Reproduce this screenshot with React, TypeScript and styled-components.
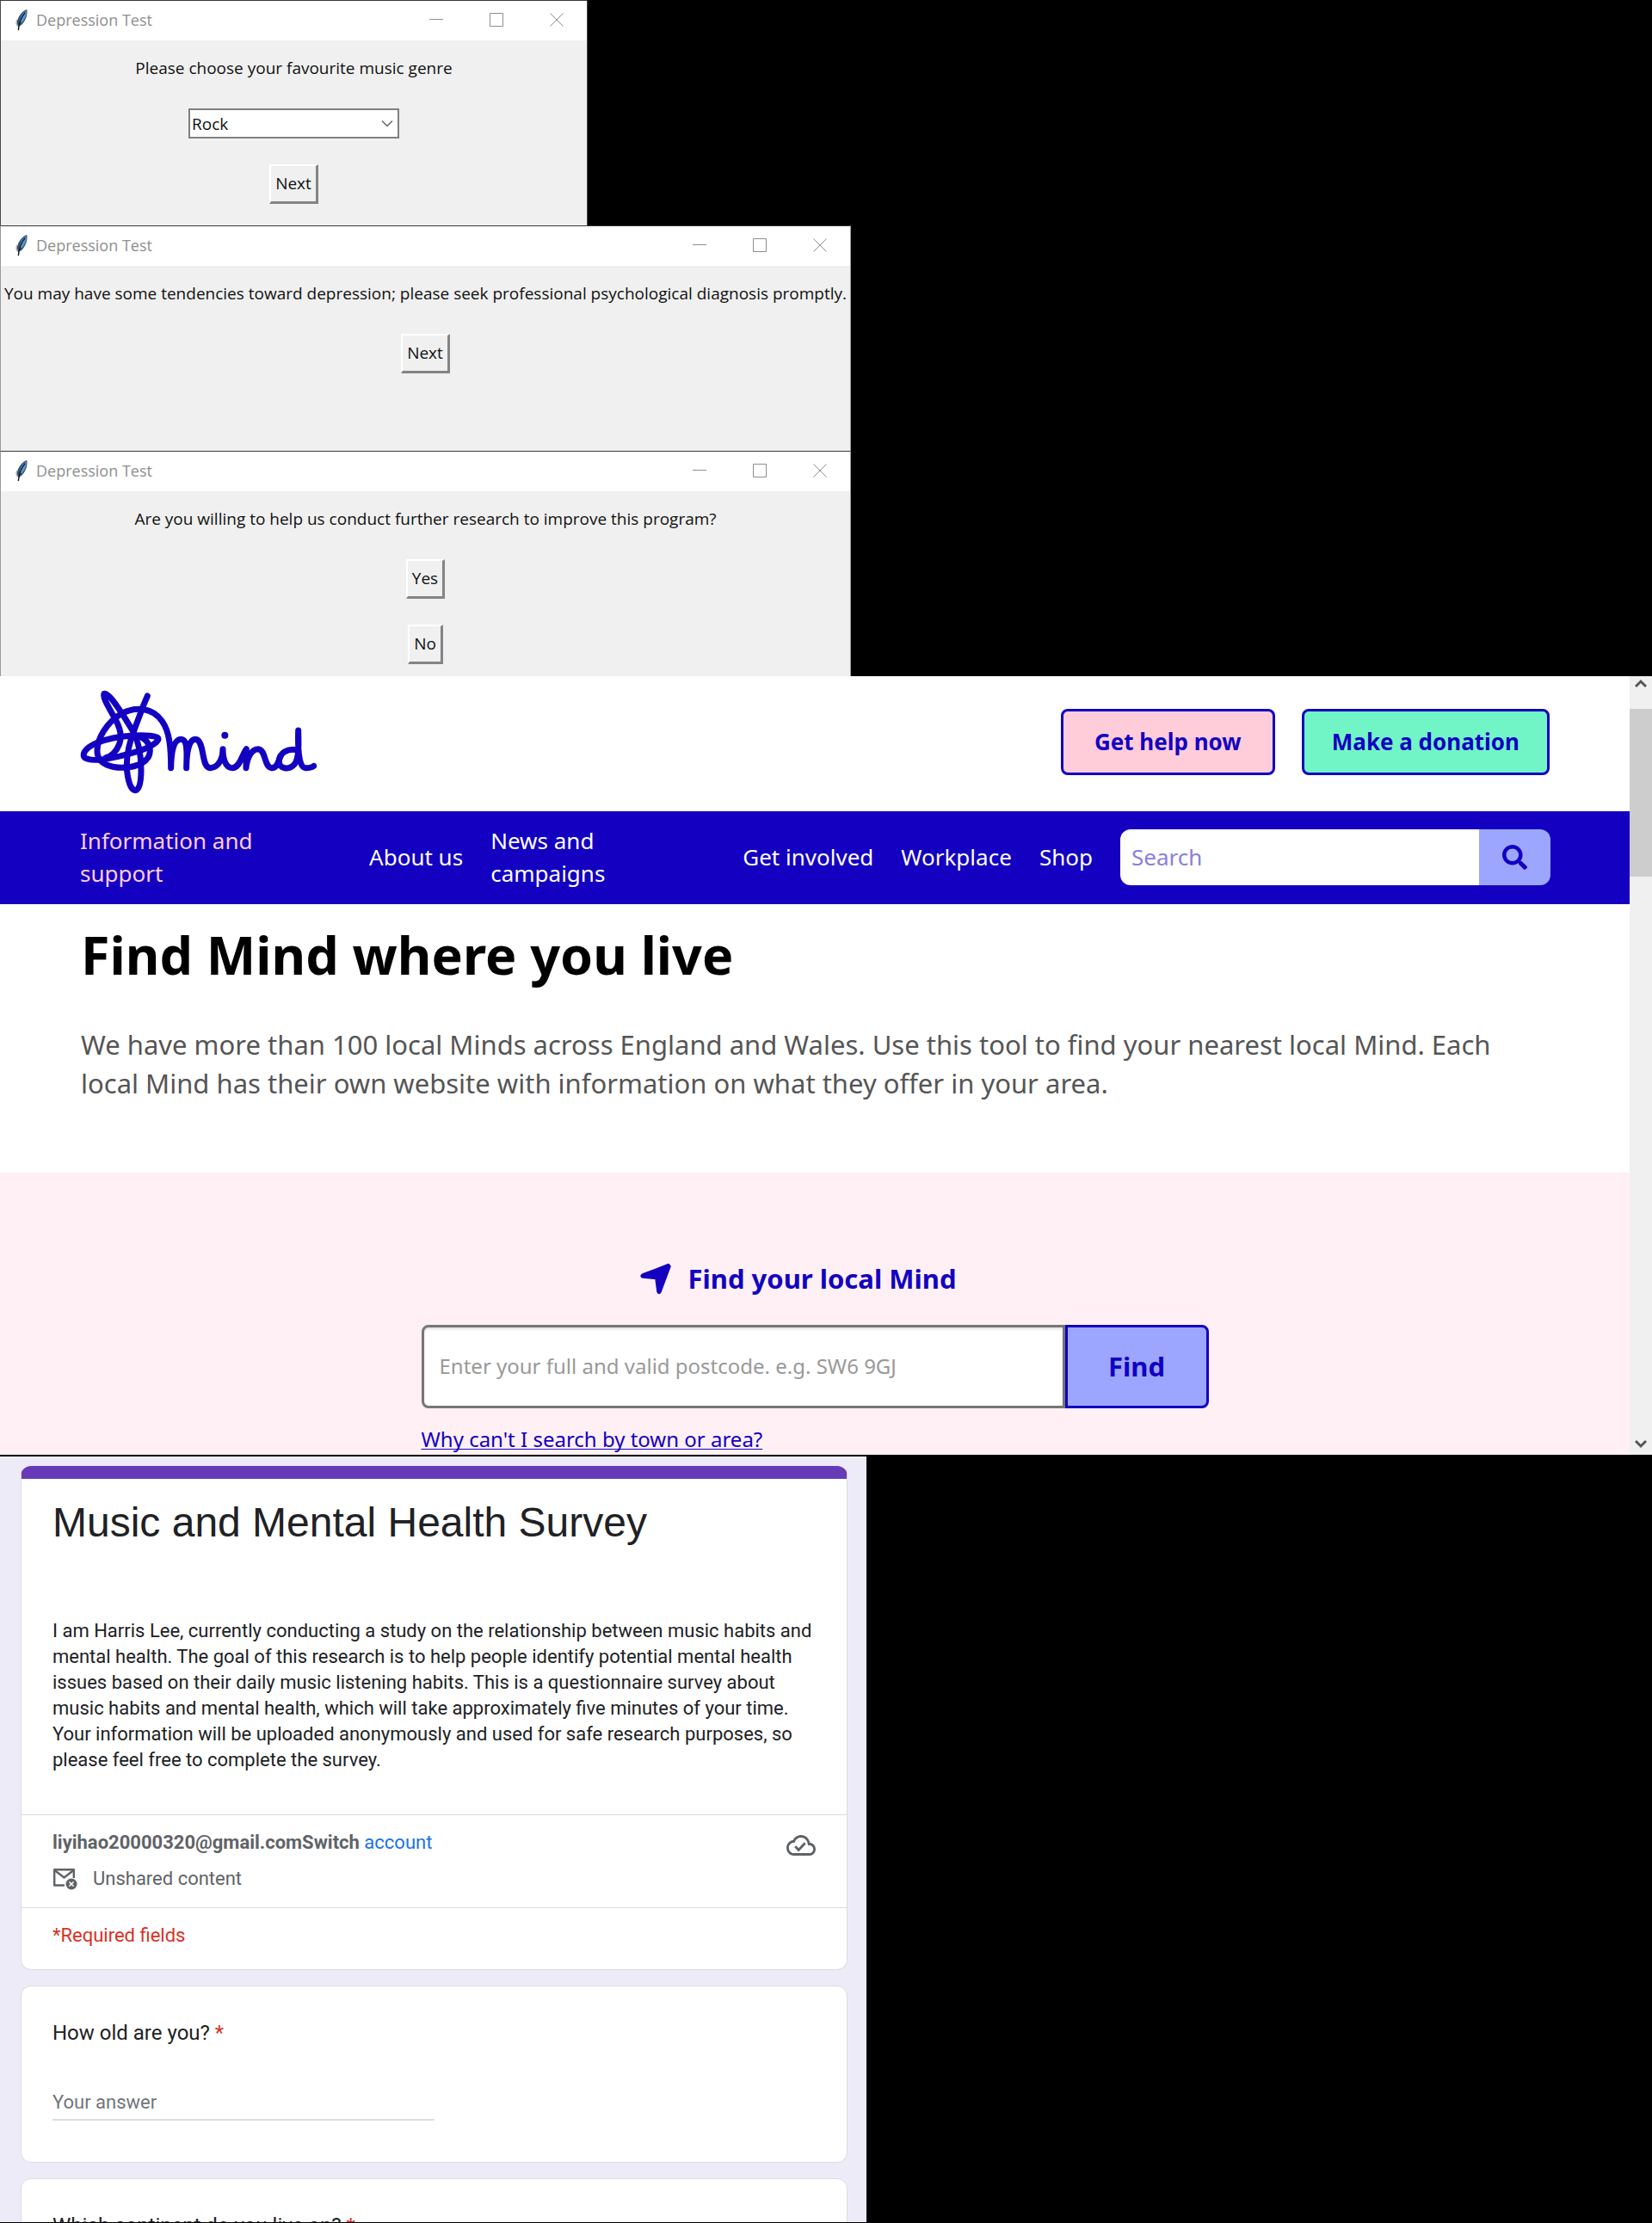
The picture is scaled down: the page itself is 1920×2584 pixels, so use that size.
import React from "react";
import styled, { createGlobalStyle } from "styled-components";
import { FaSearch } from "react-icons/fa";

const BLUE = "#1300c1";
const PERIWINKLE = "#9ca6ff";
const DIALOG_FONT = '"Open Sans", "Noto Sans", sans-serif';
const SITE_FONT = '"Noto Sans", "Open Sans", sans-serif';
const FORM_FONT = 'Roboto, "Liberation Sans", sans-serif';

const GlobalStyle = createGlobalStyle`
  *, *::before, *::after { box-sizing: border-box; }
  body { margin: 0; background: #000; }
  h1, h2, h3, p { margin: 0; }
  button, input, select { font: inherit; margin: 0; }
  svg { display: block; flex: none; }
`;

const Page = styled.main`
  display: flex;
  flex-direction: column;
  align-items: flex-start;
  background: #000;
`;

/* ---------- Desktop dialogs ---------- */

const Dialog = styled.section<{ $wide?: boolean }>`
  width: ${(p) => (p.$wide ? 989 : 683)}px;
  max-width: 100%;
  min-height: 262px;
  border: 1px solid ${(p) => (p.$wide ? "#9a9a9a" : "#48484c")};
  border-top-color: #37373b;
  border-bottom: 0;
  background: #f0f0f0;
  font-family: ${DIALOG_FONT};
  color: #111;
`;

const TitleBar = styled.header`
  display: flex;
  align-items: center;
  height: 46px;
  padding: 0 19px 2px 16px;
  background: #fff;
  color: #8f8f8f;
`;

const DialogTitle = styled.h2`
  flex: 1;
  margin-left: 8px;
  font-size: 18px;
  line-height: 26px;
  font-weight: 400;
`;

const Controls = styled.div`
  display: flex;
  gap: 37px;
`;

const ControlButton = styled.button`
  display: grid;
  place-items: center;
  width: 33px;
  height: 32px;
  padding: 0;
  border: 0;
  background: none;
  color: #8f8f8f;
`;

const DialogBody = styled.div`
  display: flex;
  flex-direction: column;
  align-items: center;
  gap: 30px;
  padding-top: 19px;
  font-size: 19px;
  line-height: 26px;
`;

const Message = styled.p`
  margin-bottom: 4px;
  white-space: nowrap;
`;

const MessageLabel = styled(Message).attrs({ as: "label" })<{ htmlFor?: string }>``;

const RaisedButton = styled.button`
  height: 46px;
  padding: 0 5px 1px;
  border-style: solid;
  border-width: 2px 3px 3px 2px;
  border-color: #fff #848484 #848484 #fff;
  background: #f0f0f0;
  color: #111;
`;

const SelectBox = styled.div`
  position: relative;
  width: 245px;
  svg {
    position: absolute;
    right: 7px;
    top: 13px;
    pointer-events: none;
  }
`;

const GenreSelect = styled.select`
  appearance: none;
  display: block;
  width: 100%;
  height: 35px;
  padding: 0 24px 0 2px;
  border: 2px solid #7f7f7f;
  border-radius: 0;
  background: #fff;
  color: #111;
`;

/* ---------- Charity website ---------- */

const Site = styled.section`
  display: grid;
  grid-template-columns: minmax(0, 1fr) 26px;
  align-self: stretch;
  background: #fff;
  font-family: ${SITE_FONT};
`;

const SiteHeader = styled.header`
  display: flex;
  align-items: center;
  justify-content: space-between;
  padding: 15px 93px 19px;
`;

const HeaderActions = styled.div`
  display: flex;
  gap: 31px;
`;

const ActionButton = styled.button<{ $fill: string }>`
  min-width: 249px;
  height: 77px;
  padding: 0 32px 2px;
  border: 3px solid ${BLUE};
  border-radius: 8px;
  background: ${(p) => p.$fill};
  color: ${BLUE};
  font-size: 26px;
  font-weight: 700;
`;

const Nav = styled.nav`
  display: flex;
  align-items: center;
  justify-content: space-between;
  padding: 15px 92px 17px 93px;
  background: ${BLUE};
  font-size: 26px;
  line-height: 38px;
`;

const NavLink = styled.a<{ $active?: boolean; $width?: number }>`
  width: ${(p) => (p.$width ? `${p.$width}px` : "auto")};
  color: ${(p) => (p.$active ? "#ffcdda" : "#fff")};
  text-decoration: none;
  white-space: nowrap;
`;

const SearchForm = styled.form`
  display: flex;
  flex: 0 1 500px;
  min-width: 0;
  height: 65px;
  border-radius: 12px;
  overflow: hidden;
`;

const SearchInput = styled.input`
  flex: 1;
  min-width: 0;
  padding: 0 13px;
  border: 0;
  background: #fff;
  color: ${BLUE};
  &::placeholder { color: #8980e0; opacity: 1; }
`;

const SearchButton = styled.button`
  display: grid;
  place-items: center;
  width: 83px;
  padding: 0;
  border: 0;
  background: ${PERIWINKLE};
  color: ${BLUE};
`;

const Intro = styled.div`
  padding: 17px 93px 81px 94px;
`;

const SiteTitle = styled.h1`
  margin-bottom: 40px;
  font-size: 61px;
  line-height: 84px;
  font-weight: 700;
  color: #000;
`;

const Lead = styled.p`
  max-width: 1680px;
  font-size: 31px;
  line-height: 45px;
  color: #555;
`;

const Finder = styled.section`
  display: flex;
  flex-direction: column;
  align-items: center;
  padding: 100px 24px 2px;
  background: #fff0f5;
`;

const FinderHeading = styled.h2`
  display: flex;
  align-items: center;
  gap: 20px;
  height: 46px;
  margin-bottom: 31px;
  padding-right: 40px;
  font-size: 31px;
  font-weight: 700;
  color: ${BLUE};
`;

const FinderColumn = styled.div`
  display: flex;
  flex-direction: column;
  align-items: flex-start;
  gap: 19px;
  width: 915px;
  max-width: 100%;
`;

const PostcodeForm = styled.form`
  display: flex;
  width: 100%;
  height: 97px;
`;

const PostcodeInput = styled.input`
  flex: 1;
  min-width: 0;
  padding: 0 18px 2px;
  border: 3px solid #767676;
  border-radius: 8px 0 0 8px;
  background: #fff;
  box-shadow: inset 0 2px 3px rgba(0, 0, 0, 0.12);
  font-size: 24px;
  &::placeholder { color: #999; opacity: 1; }
`;

const FindButton = styled.button`
  width: 167px;
  padding: 0 0 2px;
  border: 3px solid ${BLUE};
  border-radius: 0 8px 8px 0;
  background: ${PERIWINKLE};
  color: ${BLUE};
  font-size: 31px;
  font-weight: 700;
`;

const HelpLink = styled.a`
  font-size: 24px;
  line-height: 33px;
  color: ${BLUE};
  text-decoration: underline;
  text-decoration-thickness: 1px;
  text-underline-offset: 2px;
  text-decoration-skip-ink: none;
`;

const Scrollbar = styled.div`
  display: flex;
  flex-direction: column;
  background: #f0f0f0;
`;

const ScrollArrow = styled.button<{ $end?: boolean }>`
  display: flex;
  justify-content: center;
  align-items: ${(p) => (p.$end ? "flex-end" : "flex-start")};
  height: 38px;
  margin-top: ${(p) => (p.$end ? "auto" : "0")};
  padding: ${(p) => (p.$end ? "0 0 7px" : "3px 0 0")};
  border: 0;
  background: none;
`;

const ScrollThumb = styled.div`
  height: 195px;
  background: #cdcdcd;
`;

/* ---------- Survey ---------- */

const Survey = styled.section`
  display: flex;
  flex-direction: column;
  gap: 18px;
  width: 1007px;
  max-width: 100%;
  height: 890px;
  margin: 2px 0 1px;
  padding: 11px 22px 0 24px;
  overflow: hidden;
  background: #eeebf9;
  font-family: ${FORM_FONT};
  font-size: 22px;
  line-height: 30px;
  color: #202124;
`;

const Card = styled.div`
  flex: none;
  border: 1px solid #dadce0;
  border-radius: 12px;
  background: #fff;
`;

const IntroCard = styled(Card)`
  border-top: 15px solid #673ab7;
`;

const CardSection = styled.div<{ $pad: string }>`
  padding: ${(p) => p.$pad};
  & + & { border-top: 1px solid #dadce0; }
`;

const SurveyTitle = styled.h1`
  margin-bottom: 81px;
  font-family: "Liberation Sans", Arial, sans-serif;
  font-size: 48px;
  line-height: 60px;
  font-weight: 400;
`;

const AccountRow = styled.div`
  display: flex;
  justify-content: space-between;
  align-items: flex-end;
  margin-bottom: 12px;
  color: #5f6368;
  b { font-weight: 700; }
`;

const AccountLink = styled.a`
  color: #1a73e8;
  text-decoration: none;
`;

const SharingRow = styled.div`
  display: flex;
  align-items: center;
  gap: 18px;
  color: #5f6368;
`;

const RequiredNote = styled.p`
  color: #d93025;
`;

const QuestionCard = styled(Card)`
  padding: 37px 36px 48px;
`;

const QuestionLabel = styled.label`
  display: block;
  margin-bottom: 44px;
  font-size: 24px;
  line-height: 34px;
`;

const Star = styled.span`
  color: #d93025;
`;

const AnswerInput = styled.input`
  display: block;
  width: 444px;
  max-width: 100%;
  height: 41px;
  padding: 0;
  border: 0;
  border-bottom: 2px solid #dedede;
  background: none;
  color: #202124;
  &::placeholder { color: #70757a; opacity: 1; }
`;

/* ---------- Drawings ---------- */

const Feather = () => (
  <svg width="17" height="26" viewBox="0 0 17 28" aria-hidden="true">
    <path d="M14.500 1C9 3 4 9 2.500 16c-.5 3 .5 5 1.500 6.500 4-1 8-6 10-12 1-4 1.500-8 .5-9.500z" fill="#34506f" />
    <path d="M14 2.500C9.500 5 6.500 10 5.500 16l3 1.500C12 14 14.500 8 14 2.500z" fill="#5a96d8" />
    <path d="M12.500 5C8 10 5 16 4 27" fill="none" stroke="#111820" strokeWidth="1.500" />
    <path d="M2.500 14c-1.200 2-1.200 5 .8 8" fill="none" stroke="#a8a8a8" strokeWidth="1.500" />
  </svg>
);

const MinimizeIcon = () => (
  <svg width="16" height="16" viewBox="0 0 16 16" aria-hidden="true">
    <path d="M0 7.500h16" stroke="currentColor" />
  </svg>
);

const MaximizeIcon = () => (
  <svg width="16" height="16" viewBox="0 0 16 16" aria-hidden="true">
    <path d="M.5.5h15v15H.5z" fill="none" stroke="currentColor" />
  </svg>
);

const CloseIcon = () => (
  <svg width="16" height="16" viewBox="0 0 16 16" aria-hidden="true">
    <path d="M.5.5l15 15M15.500.5l-15 15" stroke="currentColor" />
  </svg>
);

const SelectChevron = () => (
  <svg width="14" height="9" viewBox="0 0 14 9" aria-hidden="true">
    <path d="M1 1.500l6 6 6-6" fill="none" stroke="#666" strokeWidth="1.500" />
  </svg>
);

const ScrollChevron = ({ down }: { down?: boolean }) => (
  <svg width="14" height="11" viewBox="0 0 14 11" aria-hidden="true">
    <path d={down ? "M1 2l6 6 6-6" : "M1 9l6-6 6 6"} fill="none" stroke="#555" strokeWidth="3" />
  </svg>
);

const MindLogo = () => (
  <svg width="275" height="123" viewBox="99 63 825 369" role="img" aria-label="Mind">
    <g fill="none" stroke={BLUE} strokeWidth="21" strokeLinecap="round" strokeLinejoin="round">
      <path d="M334 87L322 115L290 200C270 250 258 300 263 350C268 395 280 416 292 416C306 414 312 390 312 345C312 290 300 240 285 212L248 152C225 118 195 72 183 79C176 90 200 128 222 168C240 200 246 228 236 255C226 282 206 298 190 302" />
      <path d="M112 297C108 280 130 262 160 250C230 222 330 220 368 231C385 242 340 268 310 277C260 292 170 318 130 308C118 305 112 302 112 297Z" />
      <path d="M290 226C322 228 343 250 343 278C343 315 300 335 250 337C210 338 165 325 160 290C152 240 195 175 245 148C290 124 350 125 385 175C412 212 416 270 416 338C417 290 424 238 452 238C478 240 470 300 470 338C470 290 477 238 502 238C535 242 520 338 553 338C584 336 597 302 597 272C597 300 604 338 631 338C658 336 664 290 679 272C676 296 679 318 678 338C682 300 698 272 720 272C748 274 740 336 767 338C790 338 790 310 798 298" />
      <path d="M860 276C822 268 794 285 793 315C793 342 828 347 847 325C864 303 861 250 860 207C858 275 862 338 886 338C900 338 908 336 914 331" />
    </g>
    <circle cx="604" cy="224" r="12" fill={BLUE} />
  </svg>
);

const LocationArrow = () => (
  <svg width="37" height="37" viewBox="0 0 37 37" aria-hidden="true">
    <path d="M34 2L4 13.500C2 14.500 2 16 4 16.500L19.500 18L21.500 33.500C22 35.500 24 35.500 24.500 33.500L35.500 4Z" fill={BLUE} stroke={BLUE} strokeWidth="2.500" strokeLinejoin="round" />
  </svg>
);

const MailOff = () => (
  <svg width="29" height="26" viewBox="0 0 29 26" aria-hidden="true">
    <path d="M14 20.500H2.200V2.200h22.600V12" fill="none" stroke="#5f6368" strokeWidth="2.400" strokeLinejoin="round" />
    <path d="M2.500 3l11 8.500L24.500 3" fill="none" stroke="#5f6368" strokeWidth="2.400" />
    <circle cx="22" cy="19" r="6.500" fill="#5f6368" />
    <path d="M19.500 16.500l5 5m0-5l-5 5" stroke="#fff" strokeWidth="1.600" />
  </svg>
);

const CloudDone = () => (
  <svg width="34" height="24" viewBox="0 4 24 16" preserveAspectRatio="none" aria-hidden="true">
    <path fill="#5f6368" d="M19.350 10.040C18.670 6.590 15.640 4 12 4 9.110 4 6.600 5.640 5.350 8.040 2.340 8.360 0 10.910 0 14c0 3.310 2.690 6 6 6h13c2.760 0 5-2.240 5-5 0-2.640-2.050-4.780-4.650-4.960zM19 18H6c-2.210 0-4-1.790-4-4 0-2.050 1.530-3.760 3.560-3.970l1.070-.11.5-.95C8.080 7.140 9.940 6 12 6c2.620 0 4.880 1.860 5.390 4.430l.3 1.500 1.530.11c1.560.1 2.780 1.410 2.780 2.960 0 1.650-1.350 3-3 3zm-9-3.820l-2.090-2.090L6.500 13.500 10 17l6.010-6.010-1.410-1.410z" />
  </svg>
);

/* ---------- Composition ---------- */

const DialogTitleBar = () => (
  <TitleBar>
    <Feather />
    <DialogTitle>Depression Test</DialogTitle>
    <Controls>
      <ControlButton aria-label="Minimize"><MinimizeIcon /></ControlButton>
      <ControlButton aria-label="Maximize"><MaximizeIcon /></ControlButton>
      <ControlButton aria-label="Close"><CloseIcon /></ControlButton>
    </Controls>
  </TitleBar>
);

const stay = (e: React.FormEvent) => e.preventDefault();

export default function App() {
  return (
    <Page>
      <GlobalStyle />

      <Dialog>
        <DialogTitleBar />
        <DialogBody>
          <MessageLabel htmlFor="genre">Please choose your favourite music genre</MessageLabel>
          <SelectBox>
            <GenreSelect id="genre" defaultValue="Rock">
              <option>Rock</option>
            </GenreSelect>
            <SelectChevron />
          </SelectBox>
          <RaisedButton>Next</RaisedButton>
        </DialogBody>
      </Dialog>

      <Dialog $wide>
        <DialogTitleBar />
        <DialogBody>
          <Message>
            You may have some tendencies toward depression; please seek professional psychological diagnosis promptly.
          </Message>
          <RaisedButton>Next</RaisedButton>
        </DialogBody>
      </Dialog>

      <Dialog $wide>
        <DialogTitleBar />
        <DialogBody>
          <Message>Are you willing to help us conduct further research to improve this program?</Message>
          <RaisedButton>Yes</RaisedButton>
          <RaisedButton>No</RaisedButton>
        </DialogBody>
      </Dialog>

      <Site>
        <div>
          <SiteHeader>
            <MindLogo />
            <HeaderActions>
              <ActionButton $fill="#ffcdda">Get help now</ActionButton>
              <ActionButton $fill="#71f5c6">Make a donation</ActionButton>
            </HeaderActions>
          </SiteHeader>
          <Nav>
            <NavLink href="#information" $active $width={304}>Information and<br />support</NavLink>
            <NavLink href="#about">About us</NavLink>
            <NavLink href="#news" $width={261}>News and<br />campaigns</NavLink>
            <NavLink href="#involved">Get involved</NavLink>
            <NavLink href="#workplace">Workplace</NavLink>
            <NavLink href="#shop">Shop</NavLink>
            <SearchForm onSubmit={stay}>
              <SearchInput type="text" aria-label="Search" placeholder="Search" />
              <SearchButton aria-label="Submit search"><FaSearch size={29} /></SearchButton>
            </SearchForm>
          </Nav>
          <Intro>
            <SiteTitle>Find Mind where you live</SiteTitle>
            <Lead>
              We have more than 100 local Minds across England and Wales. Use this tool to find your nearest local Mind.
              Each local Mind has their own website with information on what they offer in your area.
            </Lead>
          </Intro>
          <Finder>
            <FinderHeading><LocationArrow />Find your local Mind</FinderHeading>
            <FinderColumn>
              <PostcodeForm onSubmit={stay}>
                <PostcodeInput
                  type="text"
                  aria-label="Postcode"
                  placeholder="Enter your full and valid postcode. e.g. SW6 9GJ"
                />
                <FindButton>Find</FindButton>
              </PostcodeForm>
              <HelpLink href="#why">Why can't I search by town or area?</HelpLink>
            </FinderColumn>
          </Finder>
        </div>
        <Scrollbar>
          <ScrollArrow aria-label="Scroll up"><ScrollChevron /></ScrollArrow>
          <ScrollThumb />
          <ScrollArrow $end aria-label="Scroll down"><ScrollChevron down /></ScrollArrow>
        </Scrollbar>
      </Site>

      <Survey>
        <IntroCard>
          <CardSection $pad="21px 36px 48px">
            <SurveyTitle>Music and Mental Health Survey</SurveyTitle>
            <p>
              I am Harris Lee, currently conducting a study on the relationship between music habits and mental health.
              The goal of this research is to help people identify potential mental health issues based on their daily
              music listening habits. This is a questionnaire survey about music habits and mental health, which will
              take approximately five minutes of your time. Your information will be uploaded anonymously and used for
              safe research purposes, so please feel free to complete the survey.
            </p>
          </CardSection>
          <CardSection $pad="17px 36px 18px">
            <AccountRow>
              <span><b>liyihao20000320@gmail.comSwitch</b> <AccountLink href="#account">account</AccountLink></span>
              <CloudDone />
            </AccountRow>
            <SharingRow><MailOff />Unshared content</SharingRow>
          </CardSection>
          <CardSection $pad="17px 36px 24px">
            <RequiredNote>*Required fields</RequiredNote>
          </CardSection>
        </IntroCard>
        <QuestionCard>
          <QuestionLabel htmlFor="age">How old are you? <Star>*</Star></QuestionLabel>
          <AnswerInput id="age" type="text" placeholder="Your answer" />
        </QuestionCard>
        <QuestionCard>
          <QuestionLabel htmlFor="continent">Which continent do you live on? <Star>*</Star></QuestionLabel>
          <AnswerInput id="continent" type="text" placeholder="Your answer" />
        </QuestionCard>
      </Survey>
    </Page>
  );
}
